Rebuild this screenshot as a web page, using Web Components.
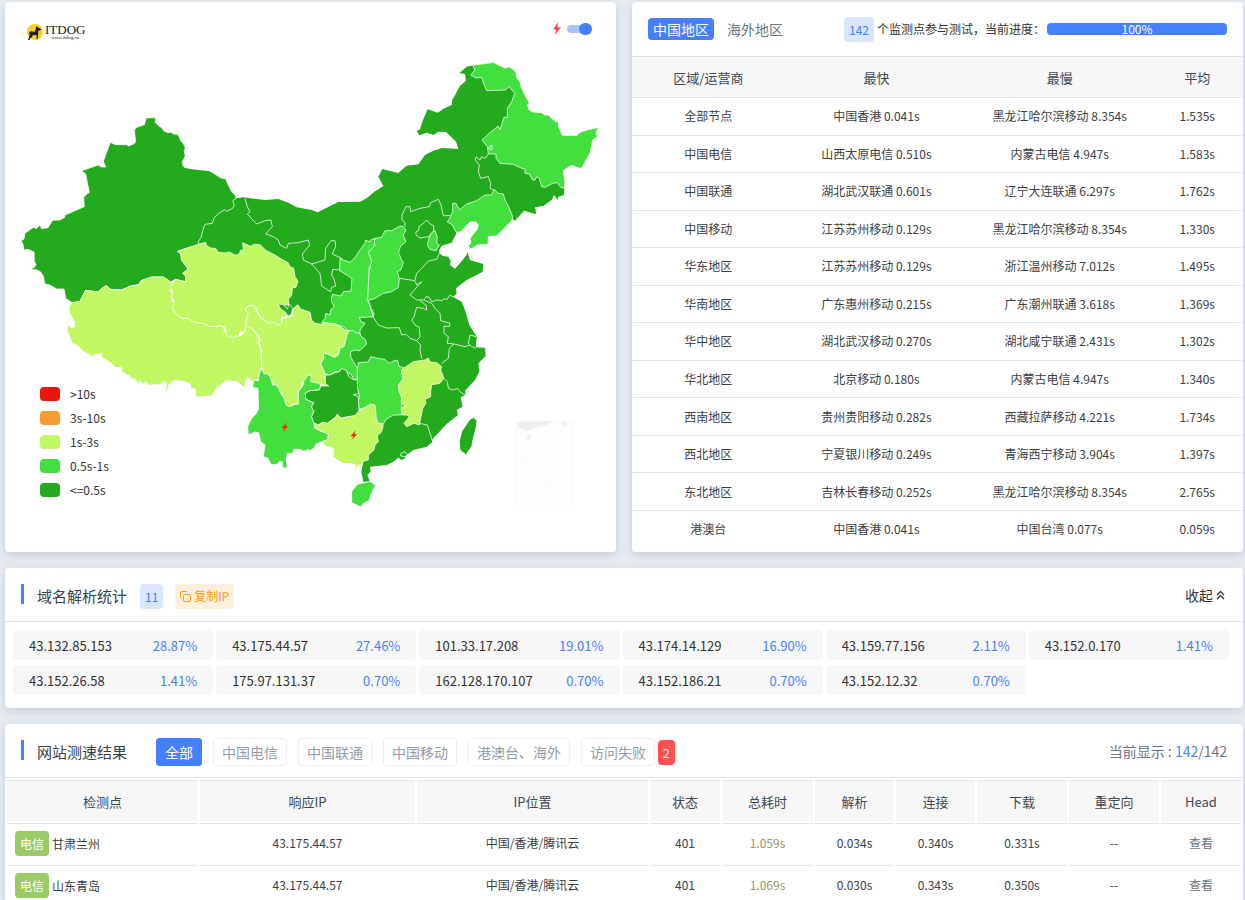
<!DOCTYPE html>
<html lang="zh-CN">
<head>
<meta charset="utf-8">
<meta name="viewport" content="width=device-width, initial-scale=1">
<title>网站测速</title>
<style>
html{scrollbar-width:none}
body{margin:0;background:#e8ecf1;color:#3b4045;font-family:"Noto Sans CJK SC",sans-serif;font-size:12px;line-height:20px}
</style>
</head>
<body>
<speed-page></speed-page>
<script>
const define = (name, markup, setup) => {
  const template = document.createElement('template');
  template.innerHTML = markup;
  customElements.define(name, class extends HTMLElement {
    constructor() {
      super();
      this.attachShadow({mode: 'open'}).append(template.content.cloneNode(true));
      if (setup) setup(this.shadowRoot, this);
    }
  });
};

define('panel-card', `
<style>:host{display:block;background:#fff;border-radius:4px;box-shadow:0 3px 10px rgba(90,110,140,.26);min-width:0;overflow:hidden}</style>
<slot></slot>`);

define('count-badge', `
<style>:host{display:inline-block;box-sizing:border-box;height:25px;line-height:25px;padding:0 5px;border-radius:4px;background:#dae5ff;color:#467fff;font-size:12px;text-align:center;white-space:nowrap}
:host([tone=red]){background:#ff5151;color:#fff}
:host([tone=green]){background:#9c6;color:#fff}</style>
<slot></slot>`);

define('section-head', `
<style>:host{display:flex;align-items:center;height:50px;padding:3px 16px 0;border-bottom:1px solid #dfe3e8}
h2{margin:0 0 4px;height:20px;padding-left:13px;font-size:15px;font-weight:400;line-height:24px;color:#36414c;border-left:3px solid #467fff;white-space:nowrap}
.end{margin:0 0 3px auto;white-space:nowrap}</style>
<h2><slot name="title"></slot></h2><slot></slot><div class="end"><slot name="end"></slot></div>`);

define('site-logo', `
<style>:host{display:flex;align-items:center;gap:2px;color:#171717;font-family:"Liberation Serif",serif}
svg{display:block}
b{display:block;font-size:13px;line-height:10px;font-weight:400}
small{display:block;font-size:5px;line-height:5px;text-align:center}</style>
<svg width="16" height="16" viewBox="0 0 48 48" aria-hidden="true"><circle cx="24" cy="24" r="24" fill="#fad01d"/><path d="M3 48L8 34 6 26 11 22 24 23 28 6 32 10 42 15 41 19 34 20 33 42 29 47 28 33 17 34 15 40 9 43 8 48Z" fill="#241e1e"/></svg>
<div><b>ITDOG</b><small>www.itdog.cn</small></div>`);

define('china-map', `
<style>:host{display:block}svg{display:block;width:100%;height:auto}
.d{fill:#24aa1d}.g{fill:#43df3f}.l{fill:#c0f763}.n{fill:none}
path{stroke:#fff;stroke-opacity:.75;stroke-width:3;stroke-linejoin:round}.base,.faint path,.bolt{stroke:none}</style>
<svg viewBox="15 6 1833 1650" role="img" aria-label="中国地区测速地图">
<path class="d base" d="M708 595L731 592 795 600 835 597 865 608 890 622 935 630 953 637 1015 606 1080 605 1100 595 1123 575 1150 558 1135 530 1147 507 1195 519 1220 497 1255 493 1275 465 1300 452 1325 444 1375 447 1368 425 1338 396 1315 395 1300 405 1280 398 1258 406 1250 392 1260 388 1268 362 1283 328 1313 338 1333 325 1355 315 1357 300 1380 258 1398 242 1395 222 1378 220 1400 200 1420 196 1470 225 1535 255 1560 290 1600 400 1660 500 1693 565 1692 585 1675 590 1673 600 1662 585 1655 600 1630 618 1605 622 1609 643 1572 632 1545 662 1535 655 1400 620 1358 675 1370 698 1355 728 1325 737 1318 750 1318 760 1329 768 1345 770 1352 782 1350 795 1365 806 1380 790 1400 765 1402 755 1410 780 1450 792 1448 815 1430 825 1410 835 1400 840 1368 865 1370 882 1358 890 1385 905 1395 930 1408 975 1430 1010 1428 1042 1455 1043 1457 1068 1435 1090 1438 1115 1425 1140 1395 1172 1397 1185 1382 1192 1388 1220 1370 1230 1374 1245 1340 1272 1300 1315 1295 1328 1280 1340 1240 1350 1220 1365 1215 1375 1205 1380 1195 1373 1180 1385 1160 1395 1110 1400 1112 1415 1102 1425 1110 1445 1090 1445 1084 1415 1090 1385 1120 1340 1100 1250 1060 1200 1040 1100 1000 975 935 972 933 940 900 932 893 915 880 925 867 950 840 930 835 913 850 880 700 800 588 780 575 730 640 620Z"/>
<g transform="translate(15 300)"><path class="d" d="M424 54L450 53 453 60 450 66 456 73 463 79 470 83 476 92 488 98 499 97 505 102 517 103 523 111 527 123 536 132 541 144 538 155 541 168 536 178 532 184 533 194 538 202 557 206 612 212 626 220 648 234 663 237 666 247 679 273 692 288 693 295 683 303 688 315 683 325 665 334 660 329 642 339 627 354 622 370 600 373 593 392 588 412 580 425 581 433 518 454 527 461 529 480 540 494 549 507 533 520 543 529 541 545 511 538 497 546 475 531 440 531 408 542 402 554 373 559 350 570 318 569 304 557 292 564 279 576 242 571 225 604 201 608 182 595 177 567 155 567 136 556 119 551 116 531 108 517 98 511 76 506 88 502 93 494 88 484 87 456 69 448 57 451 54 433 48 422 57 417 60 400 85 382 93 386 105 376 110 386 129 383 143 361 164 360 178 353 180 345 238 320 236 293 243 284 253 277 246 243 242 222 230 212 280 195 289 201 302 201 295 184 316 127 331 134 365 134 370 138 386 132 392 125 388 91 395 82 418 74Z"/></g>
<g transform="translate(180 810)"><path class="l" d="M36 98L60 94 77 61 114 66 127 54 139 47 153 59 185 60 208 49 237 44 243 32 275 21 310 21 332 36 342 37 334 46 336 54 330 62 337 71 336 94 342 100 338 118 347 131 366 145 385 145 403 157 434 161 448 170 485 167 495 176 490 181 497 185 500 197 512 195 519 203 523 198 527 203 533 194 540 200 554 185 558 168 564 168 580 178 599 210 594 220 602 232 605 290 596 312 598 328 584 331 578 336 562 321 556 332 555 347 548 349 530 334 497 332 468 356 455 378 408 381 406 357 391 354 392 343 372 334 340 331 326 345 320 368 317 362 319 338 311 335 302 344 265 345 258 334 250 341 240 333 236 341 225 327 213 326 211 318 187 307 184 293 166 292 152 279 125 261 123 252 104 252 101 261 68 243 52 226 35 220 31 204 22 185 22 167 28 167 32 174 43 170 43 155 28 127 28 109Z"/></g>
<g transform="translate(495 540)">
<path class="l" d="M38 214L101 193 122 187 125 197 138 204 152 206 160 217 178 219 194 216 210 226 223 222 226 211 235 210 233 188 256 199 268 193 285 194 304 212 316 218 330 225 350 238 368 247 375 260 386 265 390 290 399 303 393 322 382 324 380 346 370 358 372 374 355 376 341 373 348 388 368 400 362 412 348 412 352 430 338 436 326 430 315 433 305 424 292 415 282 405 274 384 262 376 248 379 241 388 250 402 244 418 242 438 239 455 225 457 218 470 212 465 205 473 185 467 180 443 170 437 133 440 119 431 88 427 70 415 51 415 32 401 23 385 27 364 21 350 22 332 16 320 27 305 30 298 61 305 63 289 54 280 69 267 50 240 48 221Z"/>
<path class="n" d="M240 55L247 80 255 95 247 102 268 125 275 132 300 122 318 120 322 140 302 162 325 170 340 180 345 195 365 205 370 190 400 188 430 180 434 195 412 222 415 240 440 252 480 240 482 205 498 182 510 182 512 200 502 222 530 235 525 270 503 268 500 285 508 300 512 318 500 322 497 335 470 318 465 280 440 252"/>
<path class="g" d="M525 235L535 240 555 247 568 235 585 210 600 190 602 180 612 185 620 178 630 176 630 195 620 215 622 240 612 265 614 300 610 340 606 362 612 365 618 385 627 400 625 410 598 412 583 412 588 425 600 430 585 450 585 468 570 458 550 452 535 440 518 435 508 432 488 430 470 428 480 415 482 400 495 405 498 388 508 380 498 362 502 343 528 348 535 335 558 333 561 295 524 272Z"/></g>
<g transform="translate(720 900)">
<path class="l" d="M17 78L20 60 25 42 16 28 23 19 37 16 46 22 52 40 60 50 72 62 80 64 85 71 100 67 113 76 125 70 127 56 144 52 157 48 160 28 173 14 182 27 210 37 214 60 226 70 245 73 252 68 285 71 299 79 318 91 328 92 322 103 318 118 312 140 300 143 295 165 283 172 262 162 250 160 252 175 242 190 252 208 270 218 263 230 252 228 262 250 266 258 245 255 232 250 222 248 212 245 214 228 205 224 198 240 188 248 185 260 175 275 175 312 160 314 148 321 138 315 132 295 120 275 112 256 98 255 91 233 82 220 72 222 66 206 64 150 56 120 60 113 40 88 25 80Z"/>
<path class="d" d="M115 12L129 13 142 27 148 12 158 25 153 45 143 47 135 35 120 25Z"/>
<path class="g" d="M328 92L340 92 350 100 358 97 362 108 376 118 380 132 370 142 360 152 345 150 332 155 332 170 340 185 352 205 352 238 342 240 335 225 320 215 305 205 298 215 285 215 270 225 256 222 250 208 242 190 252 175 250 160 262 162 283 172 295 165 300 143 312 140 318 118 322 103Z"/>
<path class="g" d="M66 206L72 222 82 220 91 233 98 255 112 256 120 275 132 295 138 315 148 321 160 314 175 312 175 275 188 258 192 243 205 224 214 228 212 245 238 250 242 258 238 270 210 272 196 280 198 298 222 308 215 320 222 335 215 350 222 370 225 385 240 392 265 402 264 418 245 425 228 432 222 445 208 452 205 448 192 454 180 448 162 448 158 460 142 460 138 475 142 504 128 503 127 485 118 485 108 495 92 492 85 475 70 470 75 435 62 425 56 398 45 396 25 404 23 380 35 355 50 340 56 325 54 265 38 262 42 240 55 243 58 218Z"/>
<path class="d" d="M256 225L270 225 285 218 298 215 305 205 320 212 325 228 342 240 352 238 354 262 358 280 340 284 355 290 358 320 355 340 342 348 325 350 302 355 292 342 287 352 262 370 248 367 235 375 222 370 215 350 222 335 215 320 222 308 198 298 196 280 210 272 238 270 242 258 266 258 256 250Z"/>
<path class="l" d="M222 370L235 375 248 367 262 370 287 352 292 342 302 355 325 350 342 348 362 330 375 322 390 314 407 315 412 325 405 358 420 365 430 375 425 395 412 408 415 425 405 435 402 450 385 465 385 480 370 484 365 496 352 498 350 515 347 510 347 494 330 490 308 490 280 472 280 445 255 438 250 428 264 418 265 402 240 392 225 380Z"/></g>
<g transform="translate(1020 900)">
<path class="g" d="M55 188L85 186 92 170 118 176 135 178 142 185 150 190 155 185 172 180 178 200 190 202 184 215 190 235 176 255 178 275 184 290 184 345 160 345 138 358 130 372 112 368 108 345 105 315 92 312 75 322 58 328 55 305 58 285 52 262 52 210Z"/>
<path class="l" d="M190 205L220 185 240 182 255 180 265 174 270 186 290 188 305 200 302 210 312 235 300 250 275 254 272 275 272 290 255 298 258 310 248 325 243 350 238 375 222 370 200 380 192 370 208 350 200 345 186 345 186 320 198 320 186 312 184 290 178 275 176 255 190 235 184 215Z"/>
<path class="g" d="M52 553L70 549 90 544 106 556 92 585 88 602 70 610 62 621 35 608 35 575Z"/>
<path class="d" d="M388 360L400 352 411 362 408 385 400 415 395 440 380 460 379 475 375 462 360 450 358 425 365 395Z"/>
<path class="n" d="M305 190L325 175M312 235L322 245 325 265 340 270 352 265 365 280 377 285M238 370L262 375 270 400 278 425M183 460L195 455 201 463 196 470 182 468Z"/></g>
<g transform="translate(960 600)">
<path class="g" d="M165 115L185 112 195 92 215 92 240 78 250 80 258 90 250 105 258 125 242 138 235 158 245 180 250 188 242 210 232 215 238 235 235 262 215 275 190 280 165 295 143 302 145 250 148 210 155 185 145 155 162 140Z"/>
<path class="n" d="M288 95L295 92 298 78 308 72 320 60 330 72 342 78 340 95 325 110 300 114 288 105ZM285 240L290 220 305 205 325 183 350 178 358 160M238 235L285 242 290 255 305 245 270 285 290 300 312 300 318 290 328 292 335 305 350 300 365 302 375 295 380 300 390 285 398 290M145 302L155 335 160 352 175 375 200 384 238 383 245 405 258 403 270 415 290 422 300 410 298 382 285 375 275 360 282 350 290 322 310 325 320 330 318 315 300 302M312 300L335 310 345 325 360 340 362 362 390 370 388 380 372 378 372 400 385 410 382 430 402 432 435 440 450 435M468 410L450 405 445 430 455 440 468 445M290 422L302 435 300 450 305 475M402 432L388 445 385 475"/>
<path class="g" d="M335 98L345 92 352 112 350 130 358 135 348 152 330 148 322 135 328 110Z"/></g>
<g transform="translate(1110 150)">
<path class="g" d="M248 460L258 460 268 480 290 462 320 452 345 435 365 435 372 418 385 430 400 432 405 450 412 462 420 480 428 500 425 512 400 538 380 558 355 560 354 583 322 585 303 597 295 588 303 578 300 565 320 540 325 525 318 516 300 516 285 532 272 545 260 548 252 535 248 525 232 516 242 500 248 485Z"/>
<path class="g" d="M308 46L370 37 405 55 415 50 430 58 438 68 440 83 450 95 453 110 460 125 470 145 478 160 472 165 478 180 488 186 515 188 525 195 535 195 556 215 566 215 565 230 577 256 622 256 628 248 650 240 690 232 678 245 682 260 668 270 660 310 648 330 634 356 603 346 580 362 585 395 583 415 572 412 562 398 548 400 525 412 515 410 508 385 500 380 495 390 488 390 478 372 465 370 465 358 448 352 430 343 390 340 378 325 378 312 355 312 352 290 336 270 360 248 385 228 390 240 402 202 412 202 412 175 425 155 434 130 418 110 405 120 350 122 340 98 335 82 318 84 302 75 315 60Z"/>
<path class="n" d="M352 296L357 290 366 286 366 298ZM105 530L105 518 96 510 96 495 108 470 120 470 122 485 150 475 178 470 182 458 205 448 213 465 220 497 242 497M355 312L345 325 335 320 330 330 318 320 316 330 328 345 325 365 332 385 355 380 362 400 360 415 370 420"/></g>
<g class="faint"><path d="M1547 1263H1716V1512H1547Z" fill="#fdfdfd" style="stroke:#f6f6f6"/><path d="M1551 1266L1655 1263 1640 1275 1605 1283 1580 1293 1553 1280ZM1688 1266L1700 1268 1699 1280 1690 1275ZM1585 1307L1597 1301 1588 1319 1577 1315Z" fill="#eee"/><path d="M1679 1340H1683V1355H1679ZM1660 1390H1666V1398H1660ZM1645 1440L1655 1450 1650 1454ZM1575 1380H1579V1398H1575ZM1560 1435H1564V1450H1560ZM1680 1385H1685V1396H1680Z" fill="#f5f5f5"/></g>
<g fill="#f20"><path class="bolt" d="M861 1267L845 1284 853 1285 848 1296 864 1279 856 1278Z"/><path class="bolt" d="M1068 1290L1052 1308 1060 1309 1055 1320 1071 1303 1063 1302Z"/></g>
</svg>`);

define('map-legend', `
<style>:host{display:block}ul{margin:0;padding:0;list-style:none}li{display:flex;align-items:center;gap:10px;height:24px;color:#333}
i{width:20px;height:14px;border-radius:4px;background:var(--c)}</style><ul></ul>`,
root => {
  root.querySelector('ul').innerHTML = [['#eb140f','>10s'],['#f99a31','3s-10s'],['#c0f763','1s-3s'],['#43df3f','0.5s-1s'],['#24aa1d','<=0.5s']]
    .map(([c, t]) => `<li><i style="--c:${c}"></i>${t.replace('<', '&lt;')}</li>`).join('');
});

define('map-panel', `
<style>:host{display:block;position:relative}
site-logo{position:absolute;left:22px;top:22px}
label{position:absolute;right:24px;top:20px;display:flex;align-items:center;gap:6px}
svg{display:block}
input{appearance:none;margin:0;width:25px;height:12px;position:relative;cursor:pointer}
input::before{content:"";position:absolute;inset:2px 2px 2px 0;border-radius:4px;background:#a9c3ff}
input::after{content:"";position:absolute;right:0;top:0;width:13px;height:12px;border-radius:6px;background:#467fff}
map-legend{position:absolute;left:35px;bottom:50px}</style>
<china-map></china-map><site-logo></site-logo>
<label><svg width="8" height="13" viewBox="0 0 8 13" aria-hidden="true"><path d="M5 0L0 7.500H3L2 13 8 5.500H4.500Z" fill="#ff4d4f"/></svg><input type="checkbox" checked aria-label="闪电标记"></label>
<map-legend></map-legend>`);

define('region-summary', `
<style>:host{display:block}
header{display:flex;align-items:center;height:54px;padding:0 16px;border-bottom:1px solid #dfe3e8}
button{font:inherit;font-size:14px;line-height:22px;padding:0 5px;border:0;border-radius:4px;background:none;color:#6b7480;margin-right:8px;white-space:nowrap}
button.on{background:#467fff;color:#fff}
.state{display:flex;align-items:center;margin-left:auto;color:#333;white-space:nowrap}
count-badge{margin-right:3px}
.bar{width:180px;height:12px;margin-left:2px;border-radius:4px;background:#467fff;color:#fff;line-height:12px;text-align:center}
table{width:100%;height:490px;margin-bottom:5px;border-collapse:collapse;table-layout:fixed;text-align:center}
th{height:38px;font-weight:400;font-size:13px;background:#f7f7f7;color:#3c4855}
th,td{padding:0;border-bottom:1px solid #e0e5eb}
th{padding-top:2px}
tr:last-child td{border-bottom:0}
.a{width:25%}.b{width:30%}.c{width:15%}</style>
<header><button class="on">中国地区</button><button>海外地区</button>
<div class="state"><count-badge>142</count-badge><span>个监测点参与测试，当前进度：</span><div class="bar" role="progressbar" aria-valuenow="100">100%</div></div></header>
<table><thead><tr><th class="a">区域/运营商</th><th class="b">最快</th><th class="b">最慢</th><th class="c">平均</th></tr></thead><tbody></tbody></table>`,
root => {
  root.querySelector('tbody').innerHTML = `全部节点|中国香港 0.041s|黑龙江哈尔滨移动 8.354s|1.535s
中国电信|山西太原电信 0.510s|内蒙古电信 4.947s|1.583s
中国联通|湖北武汉联通 0.601s|辽宁大连联通 6.297s|1.762s
中国移动|江苏苏州移动 0.129s|黑龙江哈尔滨移动 8.354s|1.330s
华东地区|江苏苏州移动 0.129s|浙江温州移动 7.012s|1.495s
华南地区|广东惠州移动 0.215s|广东潮州联通 3.618s|1.369s
华中地区|湖北武汉移动 0.270s|湖北咸宁联通 2.431s|1.302s
华北地区|北京移动 0.180s|内蒙古电信 4.947s|1.340s
西南地区|贵州贵阳移动 0.282s|西藏拉萨移动 4.221s|1.734s
西北地区|宁夏银川移动 0.249s|青海西宁移动 3.904s|1.397s
东北地区|吉林长春移动 0.252s|黑龙江哈尔滨移动 8.354s|2.765s
港澳台|中国香港 0.041s|中国台湾 0.077s|0.059s`.split('\n')
    .map(r => '<tr>' + r.split('|').map(c => `<td>${c}</td>`).join('') + '</tr>').join('');
});

define('ip-item', `
<style>:host{display:flex;justify-content:space-between;align-items:center;box-sizing:border-box;height:30px;line-height:20px;padding:2px 16px 0;border-radius:4px;background:#f7f7f7;font-size:13px;color:#333}
.p{color:#467fff}</style><slot></slot><span class="p"><slot name="percent"></slot></span>`);

define('dns-panel', `
<style>:host{display:block}
count-badge{margin-left:13px}
button{font:inherit;border:0;cursor:pointer}
.copy{display:flex;align-items:center;gap:3px;height:25px;margin-left:12px;padding:0 5px;border-radius:4px;background:#fff0dc;color:#ff9d0a;font-size:12px;white-space:nowrap}
.fold{display:flex;align-items:center;gap:3px;padding:0 2px 0 0;background:none;font-size:14px;color:#333}
svg{display:block;fill:none;stroke:currentColor}
.grid{display:grid;grid-template-columns:repeat(6,minmax(0,1fr));gap:5px 3px;padding:8px 14px 13px 8px}</style>
<section-head><span slot="title">域名解析统计</span><count-badge>11</count-badge>
<button class="copy"><svg width="11" height="11" viewBox="0 0 11 11" aria-hidden="true"><rect x="3.500" y="3.500" width="7" height="7" rx="1.500"/><path d="M2 7.500H1.500Q.5 7.500.5 6.500V1.500Q.5.5 1.500.5H6.500Q7.500.5 7.500 1.500"/></svg>复制IP</button>
<button slot="end" class="fold">收起<svg width="9" height="10" viewBox="0 0 9 10" aria-hidden="true"><path d="M1 5L4.500 1.500 8 5M1 9L4.500 5.500 8 9" stroke-width="1.300"/></svg></button></section-head>
<div class="grid"></div>`,
root => {
  root.querySelector('.grid').innerHTML = [['43.132.85.153','28.87%'],['43.175.44.57','27.46%'],['101.33.17.208','19.01%'],['43.174.14.129','16.90%'],['43.159.77.156','2.11%'],['43.152.0.170','1.41%'],['43.152.26.58','1.41%'],['175.97.131.37','0.70%'],['162.128.170.107','0.70%'],['43.152.186.21','0.70%'],['43.152.12.32','0.70%']]
    .map(([ip, p]) => `<ip-item>${ip}<span slot="percent">${p}</span></ip-item>`).join('');
});

define('result-panel', `
<style>:host{display:block}
nav{display:flex;align-items:center;gap:11px;margin-left:29px}
button{font:inherit;font-size:14px;line-height:26px;padding:0 8px;border:1px solid #eceef0;border-radius:3px;background:#fff;color:#959ca5;white-space:nowrap}
button.on{background:#467fff;border-color:#467fff;color:#fff}
nav+count-badge{margin-left:3px}
.total{font-size:14px;color:#6b7480}.total b{font-weight:400;color:#467fff}
table{width:100%;table-layout:fixed;border-collapse:separate;border-spacing:2px;text-align:center}
th,td{box-sizing:border-box;padding:0;border-top:1px solid #e0e5eb;white-space:nowrap}
th{height:41px;padding-top:1px;background:#f7f7f7;font-size:13px;font-weight:400;color:#3c4855}
td{height:40px;padding-bottom:1px}
td:first-child{text-align:left;padding-left:8px}
count-badge{margin-right:3px}
.t{color:#9a9a5c}a{color:#6b7480;text-decoration:none}</style>
<section-head><span slot="title">网站测速结果</span>
<nav><button class="on">全部</button><button>中国电信</button><button>中国联通</button><button>中国移动</button><button>港澳台、海外</button><button>访问失败</button></nav><count-badge tone="red">2</count-badge>
<div slot="end" class="total">当前显示 : <b>142</b>/142</div></section-head>
<table><colgroup></colgroup><thead><tr><th>检测点</th><th>响应IP</th><th>IP位置</th><th>状态</th><th>总耗时</th><th>解析</th><th>连接</th><th>下载</th><th>重定向</th><th>Head</th></tr></thead><tbody></tbody></table>`,
root => {
  const shares = [191, 215, 231, 70, 91, 79, 79, 90, 90, 80];
  const sum = shares.reduce((a, b) => a + b);
  root.querySelector('colgroup').innerHTML = shares.map(s => `<col style="width:${s / sum * 100}%">`).join('');
  root.querySelector('tbody').innerHTML = [['甘肃兰州','1.059s','0.034s','0.340s','0.331s'],['山东青岛','1.069s','0.030s','0.343s','0.350s']]
    .map(([n, t, d, c, l]) => `<tr><td><count-badge tone="green">电信</count-badge>${n}</td><td>43.175.44.57</td><td>中国/香港/腾讯云</td><td>401</td><td class="t">${t}</td><td>${d}</td><td>${c}</td><td>${l}</td><td>--</td><td><a href="#">查看</a></td></tr>`).join('');
});

define('speed-page', `
<style>:host{display:grid;grid-template-columns:minmax(0,1fr) minmax(0,1fr);gap:16px;padding:2px 2px 0 5px}
.wide{grid-column:1/-1}</style>
<panel-card><map-panel></map-panel></panel-card>
<panel-card><region-summary></region-summary></panel-card>
<panel-card class="wide"><dns-panel></dns-panel></panel-card>
<panel-card class="wide"><result-panel></result-panel></panel-card>`);
</script>
</body>
</html>
